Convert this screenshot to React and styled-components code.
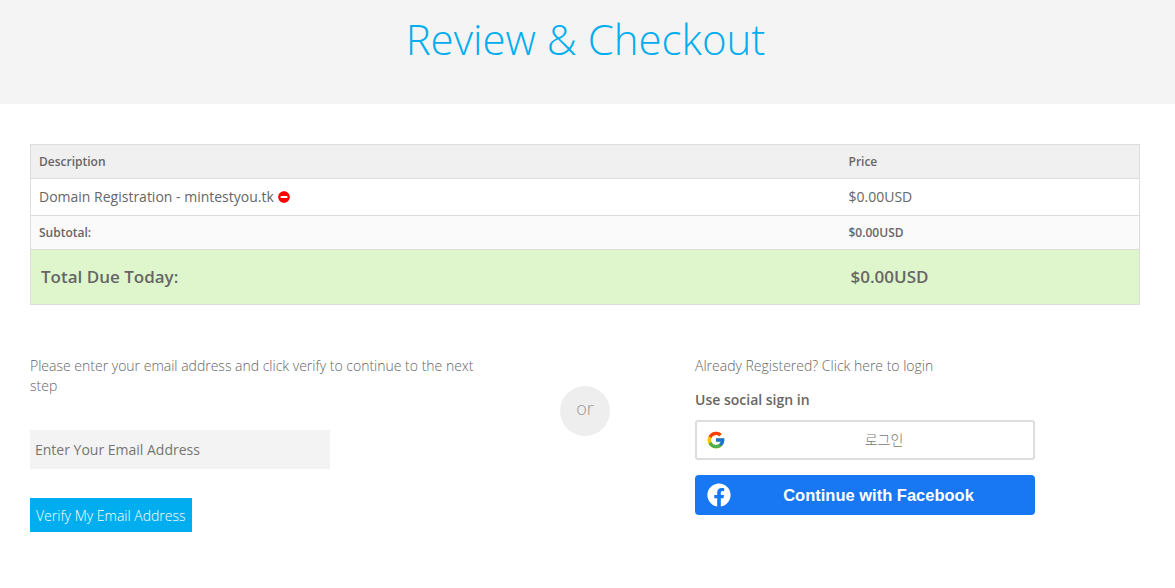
import React from 'react';
import styled, { createGlobalStyle } from 'styled-components';
import { FaFacebook, FaMinusCircle } from 'react-icons/fa';
import { FcGoogle } from 'react-icons/fc';

const GlobalStyle = createGlobalStyle`
  html, body {
    margin: 0;
    padding: 0;
    background: #fff;
    font-family: 'Open Sans', sans-serif;
    color: #666;
  }
  * {
    box-sizing: border-box;
  }
`;

export default function App() {
  return (
    <>
      <GlobalStyle />
      <Banner>
        <Title>Review &amp; Checkout</Title>
      </Banner>
      <Main>
        <CartTable>
          <colgroup>
            <col style={{ width: '810px' }} />
            <col />
          </colgroup>
          <thead>
            <tr>
              <HeadCell>Description</HeadCell>
              <HeadCell>Price</HeadCell>
            </tr>
          </thead>
          <tbody>
            <tr>
              <ItemCell>
                Domain Registration - mintestyou.tk
                <RemoveIcon />
              </ItemCell>
              <ItemCell>$0.00USD</ItemCell>
            </tr>
            <tr>
              <SubtotalCell>Subtotal:</SubtotalCell>
              <SubtotalCell>$0.00USD</SubtotalCell>
            </tr>
            <tr>
              <TotalCell>Total Due Today:</TotalCell>
              <TotalCell>$0.00USD</TotalCell>
            </tr>
          </tbody>
        </CartTable>
        <Columns>
          <div>
            <LightText>
              Please enter your email address and click verify to continue to
              the next step
            </LightText>
            <EmailInput placeholder='Enter Your Email Address' />
            <VerifyButton>Verify My Email Address</VerifyButton>
          </div>
          <OrBadge>or</OrBadge>
          <LoginColumn>
            <LightText>Already Registered? Click here to login</LightText>
            <SocialHeading>Use social sign in</SocialHeading>
            <GoogleButton>
              <FcGoogle size={20} />
              <GoogleLabel>로그인</GoogleLabel>
            </GoogleButton>
            <FacebookButton>
              <FaFacebook size={24} />
              <FacebookLabel>Continue with Facebook</FacebookLabel>
            </FacebookButton>
          </LoginColumn>
        </Columns>
      </Main>
    </>
  );
}

const Banner = styled.header`
  height: 104px;
  background: #f4f4f4;
  padding: 9px 4px 0 0;
`;
const Title = styled.h1`
  margin: 0;
  text-align: center;
  font-size: 42px;
  line-height: 60px;
  font-weight: 300;
  color: #00aeef;
`;
const Main = styled.main`
  padding: 40px 35px 0 30px;
`;
const CartTable = styled.table`
  width: 1110px;
  table-layout: fixed;
  border-collapse: collapse;
  border: 1px solid #ddd;
`;
const HeadCell = styled.th`
  height: 34px;
  padding: 0 8px;
  background: #f0f0f0;
  border-bottom: 1px solid #ddd;
  text-align: left;
  font-size: 12px;
  font-weight: 600;
`;
const ItemCell = styled.td`
  height: 37px;
  padding: 0 8px 2px;
  border-bottom: 1px solid #ddd;
  font-size: 14px;
`;
const SubtotalCell = styled.td`
  height: 34px;
  padding: 0 8px;
  background: #fafafa;
  border-bottom: 1px solid #ddd;
  font-size: 12px;
  font-weight: 600;
`;
const TotalCell = styled.td`
  height: 55px;
  padding: 0 10px 2px;
  background: #dff6cc;
  font-size: 17px;
  font-weight: 600;
`;
const RemoveIcon = styled(FaMinusCircle)`
  margin-left: 4px;
  width: 12px;
  height: 12px;
  color: #f00;
  vertical-align: -1.5px;
`;
const Columns = styled.section`
  display: grid;
  grid-template-columns: 460px 190px 1fr;
  margin-top: 51px;
`;
const LightText = styled.p`
  margin: 0;
  font-size: 14px;
  line-height: 20px;
  font-weight: 300;
`;
const EmailInput = styled.input`
  display: block;
  width: 300px;
  height: 39px;
  margin-top: 34px;
  padding: 0 5px;
  border: 0;
  background: #f3f3f3;
  font-family: inherit;
  font-size: 14px;
  &::placeholder {
    color: #757575;
    opacity: 1;
  }
`;
const VerifyButton = styled.button`
  display: block;
  height: 34px;
  margin-top: 29px;
  padding: 0 6px;
  border: 0;
  background: #00aeef;
  color: #fff;
  font-family: inherit;
  font-size: 14px;
  font-weight: 300;
`;
const OrBadge = styled.div`
  justify-self: center;
  width: 50px;
  height: 50px;
  margin-top: 30px;
  border-radius: 50%;
  background: #eee;
  color: #999;
  font-size: 18px;
  font-weight: 300;
  line-height: 44px;
  text-align: center;
`;
const LoginColumn = styled.div`
  padding-left: 15px;
`;
const SocialHeading = styled.h4`
  margin: 14px 0 10px;
  font-size: 14px;
  line-height: 20px;
  font-weight: 600;
`;
const GoogleButton = styled.div`
  display: flex;
  align-items: center;
  width: 340px;
  height: 40px;
  padding: 0 9px;
  border: 2px solid #ddd;
  border-radius: 3px;
  background: #fff;
`;
const GoogleLabel = styled.span`
  flex: 1;
  padding: 0 0 2px 18px;
  text-align: center;
  font-family: 'Noto Sans CJK KR', sans-serif;
  font-size: 14px;
  font-weight: 300;
  color: #777;
`;
const FacebookButton = styled.div`
  display: flex;
  align-items: center;
  width: 340px;
  height: 40px;
  margin-top: 15px;
  padding: 0 12px;
  border-radius: 4px;
  background: #1877f2;
  color: #fff;
`;
const FacebookLabel = styled.span`
  flex: 1;
  padding: 1px 0 0 3px;
  text-align: center;
  font-family: 'Liberation Sans', Arial, sans-serif;
  font-size: 16.5px;
  font-weight: 700;
`;
